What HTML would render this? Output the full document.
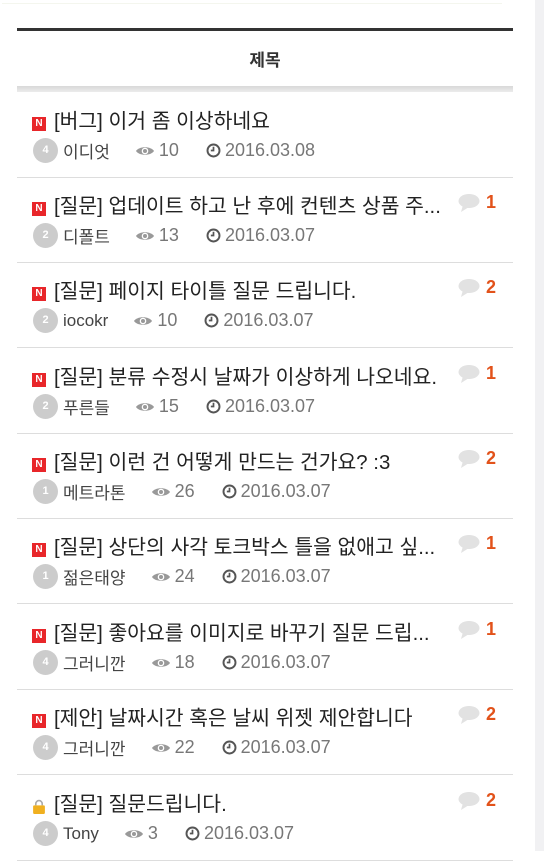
<!DOCTYPE html>
<html><head><meta charset="utf-8"><style>
*{margin:0;padding:0;box-sizing:border-box}
body{width:544px;height:851px;overflow:hidden;background:#fff;font-family:"Liberation Sans","Noto Sans CJK KR",sans-serif;position:relative}
.stripe{position:absolute;left:535px;top:0;width:9px;height:851px;background:#f1f1f3}
.top{position:absolute;left:2px;top:3px;width:500px;height:1px;background:#f4f6ee}
.dark{position:absolute;left:17px;top:28px;width:496px;height:3px;background:#333}
.hd{position:absolute;left:17px;top:46px;width:496px;text-align:center;font-size:17px;font-weight:bold;color:#333}
.gbar{position:absolute;left:17px;top:86px;width:496px;height:6px;background:linear-gradient(#d8d8d8,#ececec)}
.row{position:absolute;left:17px;width:496px;height:86px;border-bottom:1px solid #ddd}
.t{position:absolute;left:37px;top:12px;font-size:20.4px;color:#222;white-space:nowrap}
.n{position:absolute;left:15px;top:25px;width:14px;height:14px;background:#e8262a;color:#fff;font-size:10px;font-weight:bold;text-align:center;line-height:14px}
.lock{position:absolute;left:15px;top:24px;width:14px;height:15px}
.m{position:absolute;left:16px;top:46px;height:25px;font-size:17px;color:#444;display:flex;align-items:center;white-space:nowrap}
.av{width:25px;height:25px;border-radius:50%;background:#ccc;color:#fff;font-size:11px;font-weight:bold;text-align:center;line-height:25px;margin-right:5px}
.g{color:#777;display:flex;align-items:center;font-size:18px}
.c{position:absolute;left:441px;top:15px;display:flex;align-items:center;font-size:18px;font-weight:bold;color:#e2521a}
</style></head><body>
<div class="stripe"></div><div class="top"></div><div class="dark"></div>
<div class="hd">제목</div><div class="gbar"></div>
<div id="list"></div>
<script>
var d=[["[버그] 이거 좀 이상하네요","4","이디엇","10","2016.03.08",0],
["[질문] 업데이트 하고 난 후에 컨텐츠 상품 주...","2","디폴트","13","2016.03.07",1],
["[질문] 페이지 타이틀 질문 드립니다.","2","iocokr","10","2016.03.07",2],
["[질문] 분류 수정시 날짜가 이상하게 나오네요.","2","푸른들","15","2016.03.07",1],
["[질문] 이런 건 어떻게 만드는 건가요? :3","1","메트라톤","26","2016.03.07",2],
["[질문] 상단의 사각 토크박스 틀을 없애고 싶...","1","젊은태양","24","2016.03.07",1],
["[질문] 좋아요를 이미지로 바꾸기 질문 드립...","4","그러니깐","18","2016.03.07",1],
["[제안] 날짜시간 혹은 날씨 위젯 제안합니다","4","그러니깐","22","2016.03.07",2],
["[질문] 질문드립니다.","4","Tony","3","2016.03.07",2]];
var tops=[92,177,262,348,433,518,604,689,775],h="";
var eye='<svg width="20" height="12" viewBox="0 0 20 12" style="margin-right:4px"><path d="M1 6C4 1 16 1 19 6C16 11 4 11 1 6Z" fill="#999"/><circle cx="10" cy="6" r="3.3" fill="#fff"/><circle cx="10" cy="6" r="2" fill="#999"/></svg>';
var clk='<svg width="15" height="15" viewBox="0 0 14 14" style="margin-right:4px"><circle cx="7" cy="7" r="5.6" fill="none" stroke="#555" stroke-width="1.8"/><path d="M7 3.5V7H4.5" fill="none" stroke="#555" stroke-width="1.6"/></svg>';
var bub='<svg width="22" height="20" viewBox="0 0 22 20" style="margin-right:6px"><ellipse cx="11" cy="8" rx="10.5" ry="7" fill="#e2e2e2"/><path d="M5 12L3 19L11 14Z" fill="#e2e2e2"/></svg>';
d.forEach(function(r,i){
var ic=i==8?'<svg class="lock" viewBox="0 0 13 14"><path d="M3.5 6V4.5a3 3 0 0 1 6 0V6" fill="none" stroke="#aaa" stroke-width="1.5"/><rect x="1" y="6" width="11" height="8" rx="1" fill="#f0b020"/></svg>':'<div class="n">N</div>';
h+='<div class="row" style="top:'+tops[i]+'px">'+ic+'<div class="t">'+r[0]+'</div>'+
(i>0?'<div class="c">'+bub+r[5]+'</div>':'')+
'<div class="m"><div class="av">'+r[1]+'</div><span style="margin-right:25px">'+r[2]+'</span><span class="g" style="margin-right:27px">'+eye+r[3]+'</span><span class="g">'+clk+r[4]+'</span></div></div>';
});
document.getElementById('list').innerHTML=h;
</script>
</body></html>
